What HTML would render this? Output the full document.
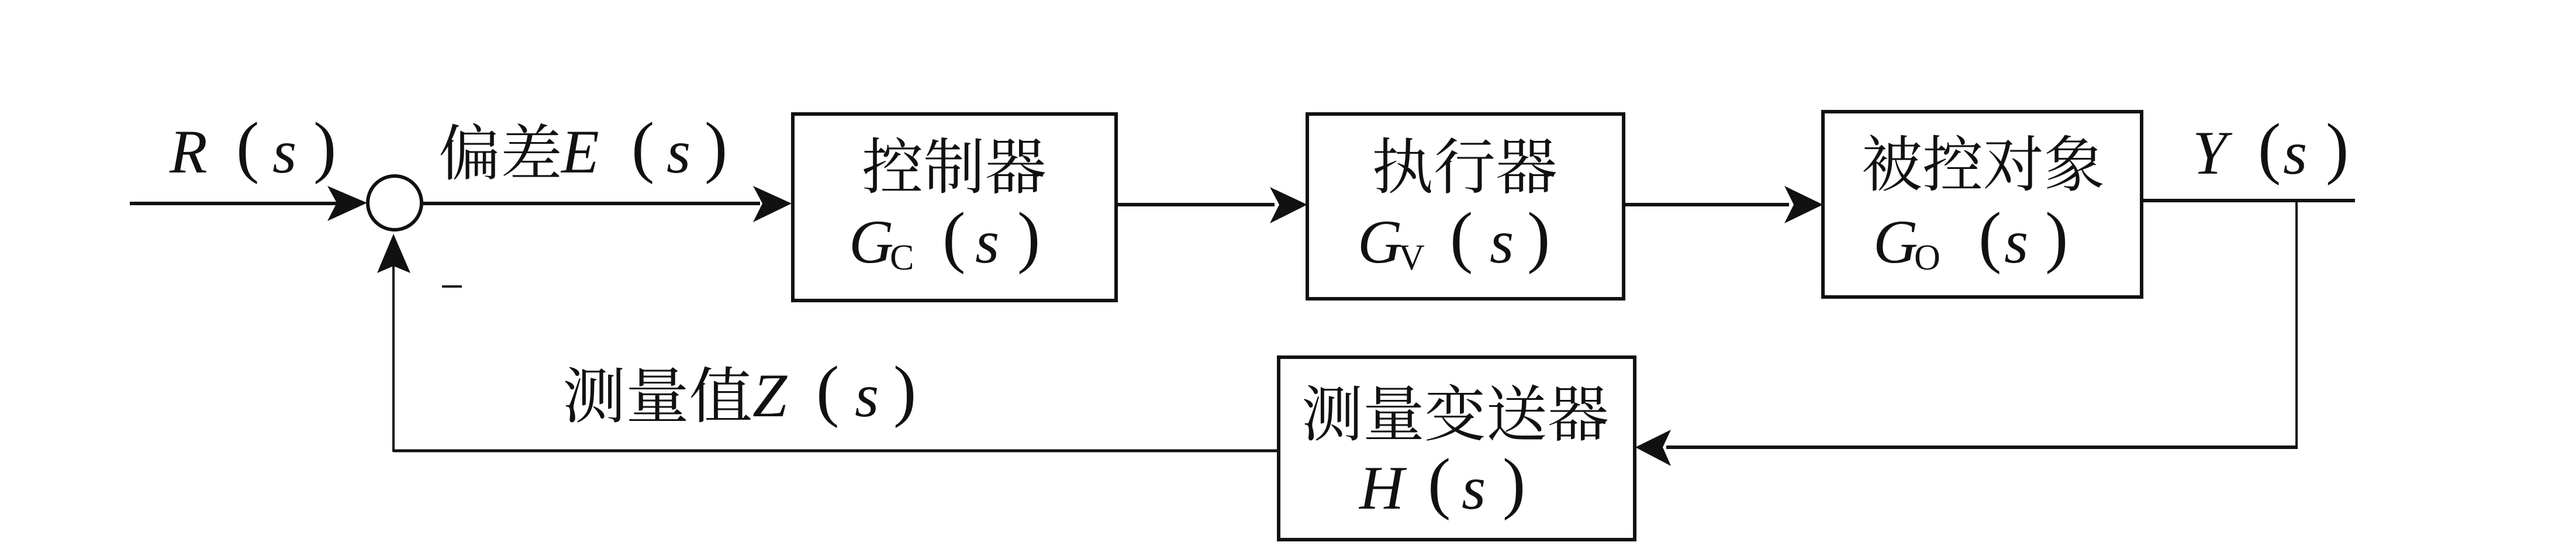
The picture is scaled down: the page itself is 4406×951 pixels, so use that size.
<!DOCTYPE html>
<html><head><meta charset="utf-8"><style>
html,body{margin:0;padding:0;background:#fff;}
svg{display:block}
.cn{font-family:"Noto Serif CJK SC","Liberation Serif",serif;font-size:104px;fill:#111}
.it{font-family:"Liberation Serif",serif;font-style:italic;font-size:106px;fill:#111}
.sub{font-family:"Liberation Serif",serif;font-size:62px;fill:#111}
.p{font-family:"Liberation Serif",serif;font-size:118px;fill:#111}
</style></head><body>
<svg width="4406" height="951" viewBox="0 0 4406 951" xmlns="http://www.w3.org/2000/svg">
<g stroke="#111" fill="none" stroke-width="6">
  <!-- input line -->
  <line x1="222" y1="348" x2="600" y2="348"/>
  <circle cx="675" cy="347" r="46" stroke-width="6"/>
  <line x1="722" y1="348" x2="1300" y2="348"/>
  <!-- boxes -->
  <rect x="1356" y="195" width="553" height="319"/>
  <rect x="2236" y="195" width="541" height="316"/>
  <rect x="3118" y="191" width="545" height="317"/>
  <rect x="2187" y="611" width="609" height="312"/>
  <line x1="1909" y1="350" x2="2180" y2="350"/>
  <line x1="2777" y1="350" x2="3060" y2="350"/>
  <line x1="3663" y1="343" x2="4028" y2="343"/>
  <line x1="3928" y1="343" x2="3928" y2="767" stroke-width="4"/>
  <line x1="3930" y1="765" x2="2850" y2="765"/>
  <line x1="2187" y1="771" x2="673" y2="771" stroke-width="5"/>
  <line x1="673" y1="773" x2="673" y2="450" stroke-width="4"/>
  <line x1="756" y1="490" x2="790" y2="490" stroke-width="4"/>
</g>
<g fill="#111">
  <polygon points="628,347 560,318 576,347 560,378"/>
  <polygon points="673,400 645,467 673,455 702,467"/>
  <polygon points="1354,348 1288,318 1304,348 1288,380"/>
  <polygon points="2236,350 2172,320 2188,350 2172,382"/>
  <polygon points="3118,350 3052,318 3068,350 3052,382"/>
  <polygon points="2797,765 2858,735 2844,765 2858,797"/>
</g>
<!-- top labels -->
<text class="it" x="290" y="295">R</text>
<text class="p" x="404" y="290">(</text>
<text class="it" x="466" y="295">s</text>
<text class="p" x="536" y="290">)</text>

<text class="cn" x="750" y="299" textLength="212" lengthAdjust="spacingAndGlyphs">偏差</text>
<text class="it" x="960" y="295">E</text>
<text class="p" x="1080" y="290">(</text>
<text class="it" x="1140" y="295">s</text>
<text class="p" x="1205" y="290">)</text>

<text class="it" x="3750" y="297">Y</text>
<text class="p" x="3862" y="292">(</text>
<text class="it" x="3905" y="297">s</text>
<text class="p" x="3978" y="292">)</text>

<!-- box1 -->
<text class="cn" x="1474" y="322" textLength="316" lengthAdjust="spacingAndGlyphs">控制器</text>
<text class="it" x="1452" y="449">G</text>
<text class="sub" x="1522" y="461">C</text>
<text class="p" x="1612" y="444">(</text>
<text class="it" x="1668" y="449">s</text>
<text class="p" x="1740" y="444">)</text>

<!-- box2 -->
<text class="cn" x="2346" y="322" textLength="318" lengthAdjust="spacingAndGlyphs">执行器</text>
<text class="it" x="2322" y="449">G</text>
<text class="sub" x="2392" y="461">V</text>
<text class="p" x="2480" y="444">(</text>
<text class="it" x="2548" y="449">s</text>
<text class="p" x="2612" y="444">)</text>

<!-- box3 -->
<text class="cn" x="3184" y="318" textLength="416" lengthAdjust="spacingAndGlyphs">被控对象</text>
<text class="it" x="3204" y="449">G</text>
<text class="sub" x="3274" y="461">O</text>
<text class="p" x="3384" y="444">(</text>
<text class="it" x="3428" y="449">s</text>
<text class="p" x="3498" y="444">)</text>

<!-- box4 -->
<text class="cn" x="2226" y="745" textLength="526" lengthAdjust="spacingAndGlyphs">测量变送器</text>
<text class="it" x="2325" y="870">H</text>
<text class="p" x="2442" y="865">(</text>
<text class="it" x="2500" y="870">s</text>
<text class="p" x="2570" y="865">)</text>

<!-- feedback label -->
<text class="cn" x="962" y="714" textLength="325" lengthAdjust="spacingAndGlyphs">测量值</text>
<text class="it" x="1287" y="712">Z</text>
<text class="p" x="1396" y="707">(</text>
<text class="it" x="1462" y="712">s</text>
<text class="p" x="1528" y="707">)</text>
</svg>
</body></html>
